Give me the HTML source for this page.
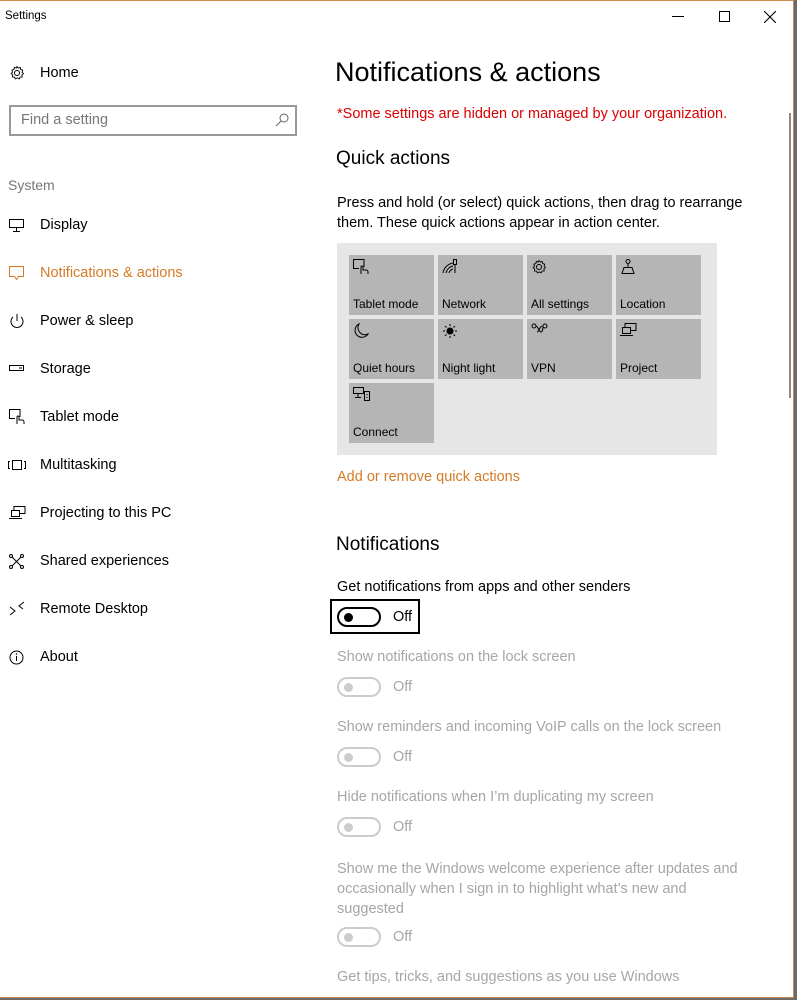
<!DOCTYPE html>
<html><head><meta charset="utf-8"><style>
*{margin:0;padding:0;box-sizing:border-box}
body{width:797px;height:1000px;overflow:hidden;background:#6b6b6b;font-family:"Liberation Sans",sans-serif;position:relative}
.win{position:absolute;left:0;top:0;width:794px;height:998px;background:#fff;border-top:1px solid #d08a4a;border-right:1px solid #c9884a;border-bottom:1px solid #c9884a}
.t{position:absolute;white-space:nowrap}
.nav{font-size:14.5px;color:#000}
.ico{position:absolute}
.tile{position:absolute;width:85px;height:60px;background:#b5b5b5}
.tile span{position:absolute;left:4px;bottom:4px;font-size:12px;color:#000}
.tile svg{position:absolute;left:4px;top:4px}
.tog{position:absolute;width:44px;height:20px;border:2px solid #000;border-radius:10px}
.tog::after{content:"";position:absolute;left:5px;top:4px;width:9px;height:9px;border-radius:50%;background:#000}
.dis{border-color:#ccc}.dis::after{background:#ccc}
.off{font-size:14.5px}
.g{color:#a6a6a6;font-size:14.5px}
</style></head><body>
<div class="win">
<div class="t" style="left:5px;top:9px;font-size:11.5px;color:#000">Settings</div>
<div class="t" style="left:672px;top:15px;width:12px;height:1px;background:#000"></div>
<div class="t" style="left:719px;top:10px;width:11px;height:11px;border:1px solid #000"></div>
<svg class="ico" style="left:764px;top:10px" width="12" height="12"><path d="M0 0L12 12M12 0L0 12" stroke="#000" stroke-width="1.1"/></svg>
<div class="t" style="left:789px;top:112px;width:2px;height:285px;background:#8a8a8a"></div>

<svg class="ico" style="left:9px;top:64px" width="16" height="16" viewBox="0 0 16 16"><circle cx="8" cy="8" r="2.5" fill="none" stroke="#000"/><path d="M8 1.5l1.3 1.6 2-.6.4 2 2 .7-.6 2 1.4 1.5-1.6 1.1.3 2.1-2.1.1-.9 1.9-1.9-1-1.9 1-.9-1.9-2.1-.1.3-2.1-1.6-1.1 1.4-1.5-.6-2 2-.7.4-2 2 .6z" fill="none" stroke="#000" stroke-width="0.9"/></svg>
<div class="t nav" style="left:40px;top:64px">Home</div>
<div class="t" style="left:9px;top:104px;width:288px;height:31px;border:2px solid #999"></div>
<div class="t" style="left:21px;top:111px;font-size:14.5px;color:#767676">Find a setting</div>
<svg class="ico" style="left:275px;top:112px" width="14" height="14"><circle cx="9" cy="5" r="4" fill="none" stroke="#666"/><path d="M6 8L1 13" stroke="#666"/></svg>
<div class="t" style="left:8px;top:176px;font-size:14px;color:#777">System</div>

<svg class="ico" style="left:9px;top:218px" width="16" height="14"><rect x="0.5" y="0.5" width="14" height="8" fill="none" stroke="#000"/><path d="M7.5 9v3M4 12.5h7" stroke="#000"/></svg>
<div class="t nav" style="left:40px;top:216px">Display</div>
<svg class="ico" style="left:9px;top:265px" width="16" height="16"><path d="M0.5 0.5h14v10h-5l-2 3-2-3h-5z" fill="none" stroke="#d47b27"/></svg>
<div class="t nav" style="left:40px;top:264px;color:#d47b27">Notifications &amp; actions</div>
<svg class="ico" style="left:9px;top:312px" width="16" height="16"><path d="M4 4a6 6 0 1 0 8 0" fill="none" stroke="#000"/><path d="M8 1v7" stroke="#000"/></svg>
<div class="t nav" style="left:40px;top:312px">Power &amp; sleep</div>
<svg class="ico" style="left:9px;top:364px" width="16" height="8"><rect x="0.5" y="0.5" width="14" height="5" fill="none" stroke="#000"/><path d="M10 3h3" stroke="#000"/></svg>
<div class="t nav" style="left:40px;top:360px">Storage</div>
<svg class="ico" style="left:9px;top:408px" width="16" height="16"><path d="M11 8V0.5H0.5v9H6" fill="none" stroke="#000"/><path d="M8 15V8a1 1 0 0 1 2 0v3h3a2 2 0 0 1 2 2v2" fill="none" stroke="#000"/></svg>
<div class="t nav" style="left:40px;top:408px">Tablet mode</div>
<svg class="ico" style="left:8px;top:459px" width="18" height="12"><rect x="4.5" y="0.5" width="9" height="9" fill="none" stroke="#000"/><path d="M2 1.5H.5v7H2M16 1.5h1.5v7H16" fill="none" stroke="#000"/></svg>
<div class="t nav" style="left:40px;top:456px">Multitasking</div>
<svg class="ico" style="left:9px;top:505px" width="17" height="14"><path d="M5 4.5V0.5h11v7h-5" fill="none" stroke="#000"/><rect x="2.5" y="4.5" width="8" height="6" fill="none" stroke="#000"/><path d="M0 12.5h13" stroke="#000"/></svg>
<div class="t nav" style="left:40px;top:504px">Projecting to this PC</div>
<svg class="ico" style="left:9px;top:553px" width="16" height="16"><circle cx="2" cy="2" r="1.5" fill="none" stroke="#000"/><circle cx="13" cy="2" r="1.5" fill="none" stroke="#000"/><circle cx="2" cy="13" r="1.5" fill="none" stroke="#000"/><circle cx="13" cy="13" r="1.5" fill="none" stroke="#000"/><path d="M3 3l9 9M12 3l-9 9" stroke="#000"/></svg>
<div class="t nav" style="left:40px;top:552px">Shared experiences</div>
<svg class="ico" style="left:9px;top:600px" width="16" height="16"><path d="M1 6l5 4-5 4M15 1l-5 4 4 3" fill="none" stroke="#000"/></svg>
<div class="t nav" style="left:40px;top:600px">Remote Desktop</div>
<svg class="ico" style="left:9px;top:649px" width="16" height="16"><circle cx="7.5" cy="7.5" r="6.5" fill="none" stroke="#000"/><path d="M7.5 6v5" stroke="#000"/><circle cx="7.5" cy="4" r=".8"/></svg>
<div class="t nav" style="left:40px;top:648px">About</div>

<div class="t" style="left:335px;top:56px;font-size:27px;color:#000">Notifications &amp; actions</div>
<div class="t" style="left:337px;top:105px;font-size:14.5px;color:#d00">*Some settings are hidden or managed by your organization.</div>
<div class="t" style="left:336px;top:147px;font-size:19px;color:#000">Quick actions</div>
<div class="t" style="left:337px;top:192px;font-size:14.5px;line-height:20px;color:#000">Press and hold (or select) quick actions, then drag to rearrange<br>them. These quick actions appear in action center.</div>
<div class="t" style="left:337px;top:242px;width:380px;height:212px;background:#e6e6e6"></div>
<div class="tile" style="left:349px;top:254px"><svg width="16" height="16"><path d="M11 8V0.5H0.5v9H6" fill="none" stroke="#000"/><path d="M8 15V8a1 1 0 0 1 2 0v3h3a2 2 0 0 1 2 2v2" fill="none" stroke="#000"/></svg><span>Tablet mode</span></div>
<div class="tile" style="left:438px;top:254px"><svg width="16" height="16"><path d="M1 14a12 12 0 0 1 10-10M4 14a9 9 0 0 1 7-7M7 14a6 6 0 0 1 4-4" fill="none" stroke="#000"/><rect x="11.5" y="0.5" width="3" height="5" fill="none" stroke="#000"/><path d="M13 6v8" stroke="#000"/></svg><span>Network</span></div>
<div class="tile" style="left:527px;top:254px"><svg width="16" height="16" viewBox="0 0 16 16"><circle cx="8" cy="8" r="2.5" fill="none" stroke="#000"/><path d="M8 1.5l1.3 1.6 2-.6.4 2 2 .7-.6 2 1.4 1.5-1.6 1.1.3 2.1-2.1.1-.9 1.9-1.9-1-1.9 1-.9-1.9-2.1-.1.3-2.1-1.6-1.1 1.4-1.5-.6-2 2-.7.4-2 2 .6z" fill="none" stroke="#000" stroke-width="0.9"/></svg><span>All settings</span></div>
<div class="tile" style="left:616px;top:254px"><svg width="16" height="16"><circle cx="8" cy="2.5" r="2" fill="none" stroke="#000"/><path d="M8 4.5v4M4 8.5h8l2 6H2z" fill="none" stroke="#000"/></svg><span>Location</span></div>
<div class="tile" style="left:349px;top:318px"><svg width="16" height="16"><path d="M6 1a7 7 0 1 0 9 10A7 7 0 0 1 6 1z" fill="none" stroke="#000"/></svg><span>Quiet hours</span></div>
<div class="tile" style="left:438px;top:318px"><svg width="16" height="16"><circle cx="8" cy="8" r="3.5" fill="#000"/><path d="M8 1v2M8 13v2M1 8h2M13 8h2M3 3l1.5 1.5M11.5 11.5L13 13M3 13l1.5-1.5M11.5 4.5L13 3" stroke="#000"/></svg><span>Night light</span></div>
<div class="tile" style="left:527px;top:318px"><svg width="18" height="12"><circle cx="3" cy="3" r="2" fill="none" stroke="#000"/><circle cx="14" cy="3" r="2" fill="none" stroke="#000"/><path d="M5 3c2 0 3 6 5 6s2-6 2-6M6 9c2 0 3-6 5-6" fill="none" stroke="#000"/></svg><span>VPN</span></div>
<div class="tile" style="left:616px;top:318px"><svg width="17" height="14"><path d="M5 4.5V0.5h11v7h-5" fill="none" stroke="#000"/><rect x="2.5" y="4.5" width="8" height="6" fill="none" stroke="#000"/><path d="M0 12.5h13" stroke="#000"/></svg><span>Project</span></div>
<div class="tile" style="left:349px;top:382px"><svg width="18" height="14"><path d="M0.5 0.5h10v6h-10zM5 7v3M2 10.5h6" fill="none" stroke="#000"/><rect x="11.5" y="4.5" width="5" height="9" fill="none" stroke="#000"/><path d="M14 7v1M14 10v1" stroke="#000"/></svg><span>Connect</span></div>
<div class="t" style="left:337px;top:468px;font-size:14.5px;color:#d47b27">Add or remove quick actions</div>

<div class="t" style="left:336px;top:533px;font-size:19px;color:#000">Notifications</div>
<div class="t" style="left:337px;top:578px;font-size:14.5px;color:#000">Get notifications from apps and other senders</div>
<div class="t" style="left:330px;top:598px;width:90px;height:35px;border:2px solid #000"></div>
<div class="tog" style="left:337px;top:606px"></div>
<div class="t off" style="left:393px;top:608px;color:#000">Off</div>

<div class="t g" style="left:337px;top:648px">Show notifications on the lock screen</div>
<div class="tog dis" style="left:337px;top:676px"></div><div class="t g" style="left:393px;top:678px">Off</div>
<div class="t g" style="left:337px;top:718px">Show reminders and incoming VoIP calls on the lock screen</div>
<div class="tog dis" style="left:337px;top:746px"></div><div class="t g" style="left:393px;top:748px">Off</div>
<div class="t g" style="left:337px;top:788px">Hide notifications when I’m duplicating my screen</div>
<div class="tog dis" style="left:337px;top:816px"></div><div class="t g" style="left:393px;top:818px">Off</div>
<div class="t g" style="left:337px;top:858px;line-height:20px">Show me the Windows welcome experience after updates and<br>occasionally when I sign in to highlight what’s new and<br>suggested</div>
<div class="tog dis" style="left:337px;top:926px"></div><div class="t g" style="left:393px;top:928px">Off</div>
<div class="t g" style="left:337px;top:968px">Get tips, tricks, and suggestions as you use Windows</div>
</div>
</body></html>
